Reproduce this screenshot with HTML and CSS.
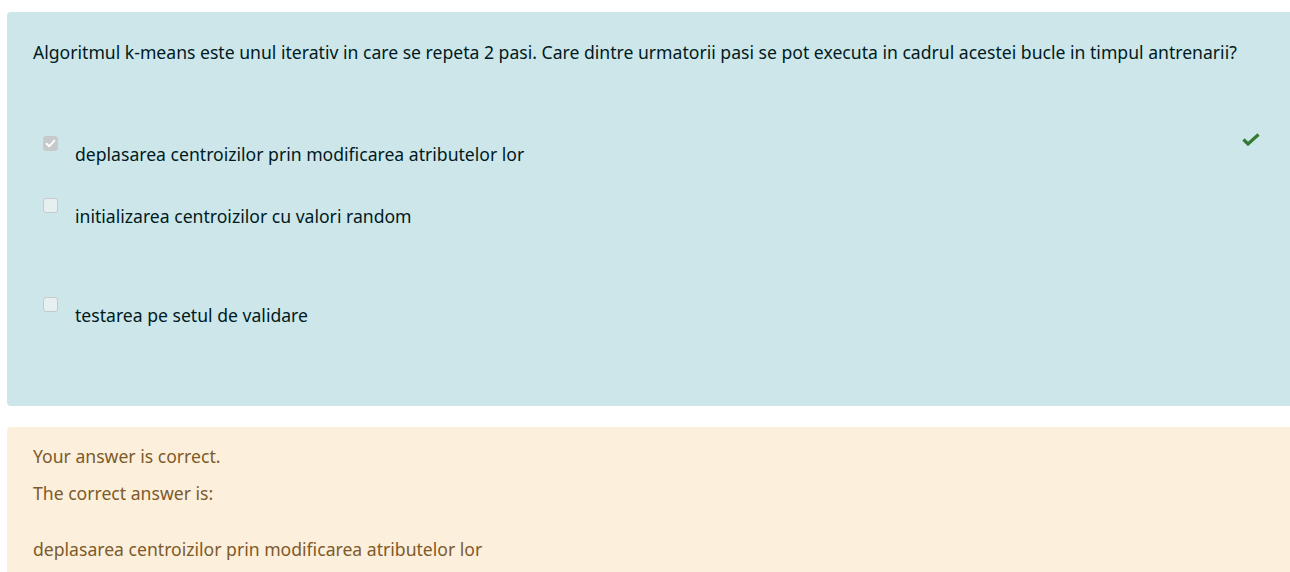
FILE: index.html
```html
<!DOCTYPE html>
<html lang="ro">
<head>
<meta charset="utf-8">
<link rel="stylesheet" href="styles.css">
</head>
<body>
<div class="que">
  <div class="formulation">
    <div class="qtext">Algoritmul k-means este unul iterativ in care se repeta 2 pasi. Care dintre urmatorii pasi se pot executa in cadrul acestei bucle in timpul antrenarii?</div>
    <div class="answers">
      <div class="row row1">
        <span class="cb checked"><svg viewBox="0 0 15 15" width="15" height="15"><path d="M3.6 7.8 L6.2 10.3 L11.4 4.6" fill="none" stroke="#fff" stroke-width="1.9" stroke-linecap="round" stroke-linejoin="round"/></svg></span>
        <span class="label">deplasarea centroizilor prin modificarea atributelor lor</span>
        <svg class="tick" viewBox="0 0 18 13" width="18" height="13"><path d="M1.5 6.5 L6 11 L16.5 1.5" fill="none" stroke="#357a32" stroke-width="3.2" stroke-linejoin="miter"/></svg>
      </div>
      <div class="row row2">
        <span class="cb"></span>
        <span class="label">initializarea centroizilor cu valori random</span>
      </div>
      <div class="row row3">
        <span class="cb"></span>
        <span class="label">testarea pe setul de validare</span>
      </div>
    </div>
  </div>
  <div class="outcome">
    <p class="fb">Your answer is correct.</p>
    <p class="fb">The correct answer is:</p>
    <p class="fb right">deplasarea centroizilor prin modificarea atributelor lor</p>
  </div>
</div>
</body>
</html>
```

FILE: styles.css
```css
html, body {
  margin: 0;
  padding: 0;
  background: #fff;
  overflow: hidden;
}
body {
  font-family: "Noto Sans", "Open Sans", sans-serif;
  font-size: 17.6px;
  line-height: 26px;
  width: 1290px;
  height: 572px;
}
.que {
  padding: 12px 0 0 7px;
}
.formulation {
  background: #cce6ea;
  color: #001a1e;
  border-radius: 4px 0 0 4px;
  margin-right: -20px;
  padding: 27px 50px 0 26px;
  height: 394px;
  box-sizing: border-box;
}
.qtext {
  margin: 0;
}
.answers {
  margin-top: 71px;
}
.row {
  display: flex;
  align-items: flex-start;
}
.row2 { margin-top: 31px; }
.row3 { margin-top: 68px; }
.cb {
  width: 15px;
  height: 15px;
  margin-left: 10px;
  margin-right: 17px;
  border-radius: 3px;
  box-sizing: border-box;
  border: 1px solid #c3cacd;
  background: #e7eff1;
  flex: none;
  display: flex;
}
.cb.checked {
  background: #c6cacb;
  border-color: #c6cacb;
}
.cb svg { margin: -1px; }
.label {
  margin-top: 5px;
}
.tick {
  margin-left: auto;
  margin-top: -3px;
}
.outcome {
  margin-top: 21px;
  background: #fcefdc;
  color: #7d5a29;
  border-radius: 4px 0 0 4px;
  margin-right: -20px;
  padding: 16px 26px 20px 26px;
}
.fb {
  margin: 0 0 11px 0;
}
.fb.right {
  margin-top: 30px;
}
```
